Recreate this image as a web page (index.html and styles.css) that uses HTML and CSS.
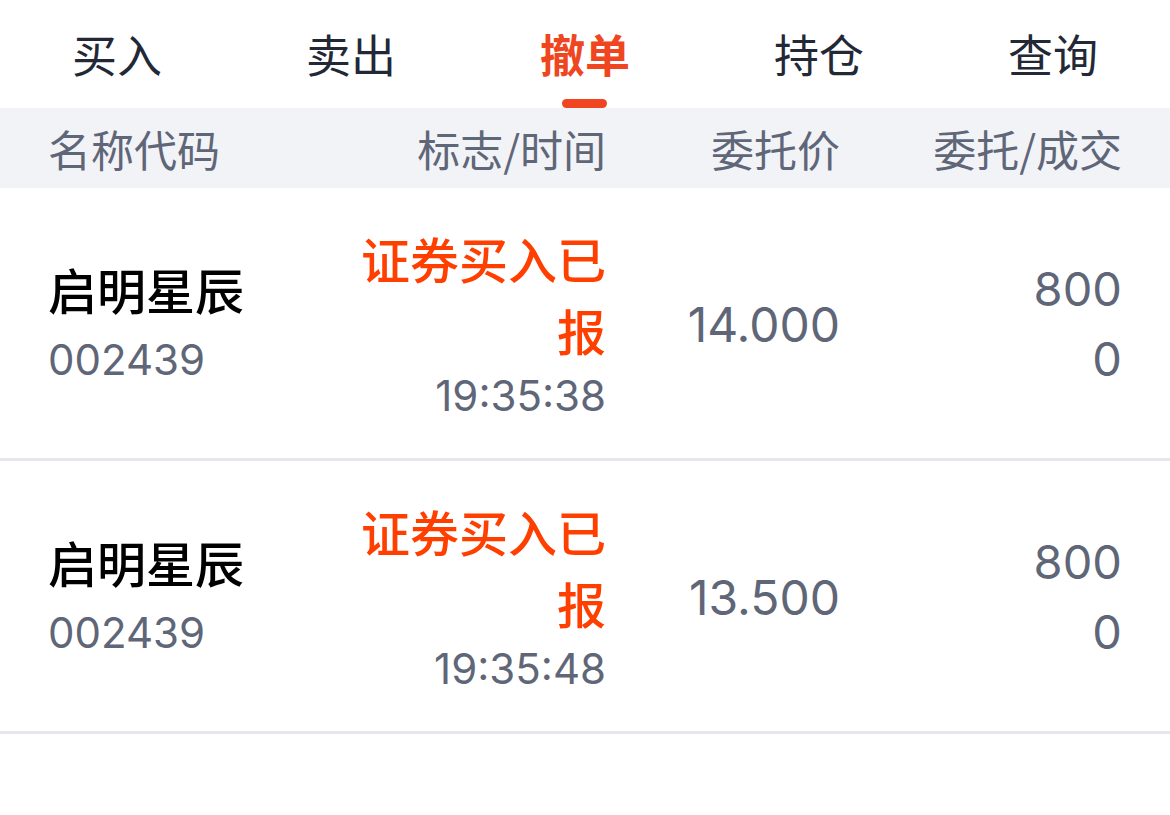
FILE: index.html
```html
<!DOCTYPE html>
<html lang="zh-CN">
<head>
<meta charset="utf-8">
<title>撤单</title>
<link rel="stylesheet" href="styles.css">
</head>
<body>
<div class="page">
  <nav class="tabs">
    <div class="tab">买入</div>
    <div class="tab">卖出</div>
    <div class="tab active">撤单</div>
    <div class="tab">持仓</div>
    <div class="tab">查询</div>
  </nav>
  <div class="head grid">
    <div class="c1">名称代码</div>
    <div class="c2">标志/时间</div>
    <div class="c3">委托价</div>
    <div class="c4">委托/成交</div>
  </div>
  <div class="row grid">
    <div class="c1">
      <div class="name">启明星辰</div>
      <div class="code">002439</div>
    </div>
    <div class="c2">
      <div class="status">证券买入已报</div>
      <div class="time">19:35:38</div>
    </div>
    <div class="c3 price">14.000</div>
    <div class="c4">
      <div class="qty">800</div>
      <div class="qty">0</div>
    </div>
  </div>
  <div class="row grid">
    <div class="c1">
      <div class="name">启明星辰</div>
      <div class="code">002439</div>
    </div>
    <div class="c2">
      <div class="status">证券买入已报</div>
      <div class="time">19:35:48</div>
    </div>
    <div class="c3 price">13.500</div>
    <div class="c4">
      <div class="qty">800</div>
      <div class="qty">0</div>
    </div>
  </div>
</div>
</body>
</html>
```

FILE: styles.css
```css
* { box-sizing: border-box; }
html, body { margin: 0; padding: 0; background: #ffffff; }
body {
  font-family: "Noto Sans CJK SC", "Noto Sans", sans-serif;
  width: 1170px;
}
.page { width: 1170px; }

.tabs {
  display: grid;
  grid-template-columns: repeat(5, 1fr);
  height: 108px;
}
.tab {
  position: relative;
  text-align: center;
  font-size: 45px;
  line-height: 108px;
  color: #222836;
}
.tab.active {
  color: #ef4520;
  font-weight: 700;
}
.tab.active::after {
  content: "";
  position: absolute;
  left: 50%;
  bottom: 0;
  width: 45px;
  height: 9px;
  margin-left: -23px;
  border-radius: 5px;
  background: #ef4520;
}

.grid {
  display: grid;
  grid-template-columns: 282px 276px 234px 282px;
  padding: 0 48px;
}
.c1 { text-align: left; }
.c2, .c3, .c4 { text-align: right; }

.head {
  height: 80px;
  align-items: center;
  background: #f2f3f7;
  color: #5f6677;
  font-size: 43px;
  line-height: 80px;
}

.row {
  align-items: center;
  padding-top: 34px;
  padding-bottom: 32px;
  border-bottom: 3px solid #e5e7ec;
}
.name {
  font-size: 49px;
  font-weight: 500;
  line-height: 67px;
  color: #000000;
}
.code {
  font-family: "Inter", "Noto Sans CJK SC", sans-serif;
  font-size: 42px;
  line-height: 67px;
  padding-top: 4px;
  color: #5f6677;
}
.status {
  font-size: 49px;
  font-weight: 500;
  line-height: 72px;
  color: #ff3f00;
}
.time {
  font-family: "Inter", "Noto Sans CJK SC", sans-serif;
  font-size: 42px;
  line-height: 60px;
  color: #5f6677;
}
.price {
  font-family: "Inter", "Noto Sans CJK SC", sans-serif;
  font-size: 48px;
  color: #5f6677;
}
.qty {
  font-family: "Inter", "Noto Sans CJK SC", sans-serif;
  font-size: 47px;
  line-height: 70px;
  color: #5f6677;
}
```
